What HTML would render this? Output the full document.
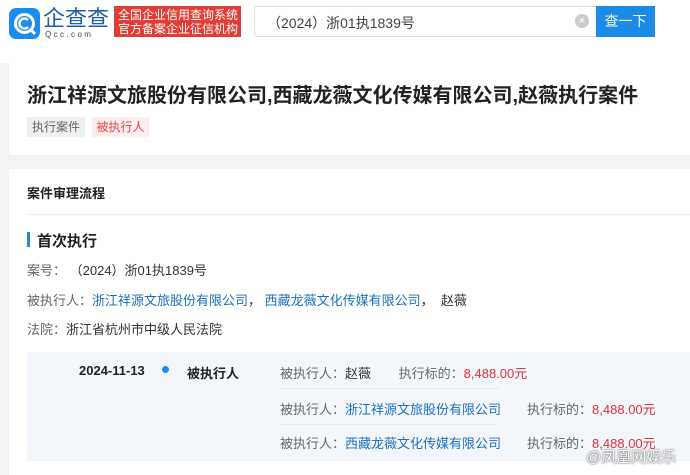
<!DOCTYPE html>
<html><head><meta charset="utf-8"><style>
*{margin:0;padding:0;box-sizing:border-box}
body{width:690px;height:475px;overflow:hidden;background:#f3f3f3;font-family:"Liberation Sans","Noto Sans CJK SC",sans-serif;color:#333;position:relative}
.a{position:absolute;white-space:nowrap}
.g{color:#666}.b{color:#1a6fc4}.r{color:#e0303a}
</style></head><body>
<div class="a" style="left:0;top:0;width:690px;height:63px;background:#fff"></div>
<svg class="a" style="left:9px;top:8px" width="31" height="31" viewBox="0 0 31 31"><rect width="31" height="31" rx="7" fill="#1b8cf0"/><circle cx="15.5" cy="15.5" r="9" fill="none" stroke="#fff" stroke-width="3"/><path d="M19 12a5 5 0 1 0 0 7" fill="none" stroke="#fff" stroke-width="2.5"/><path d="M21 21l5 5" stroke="#fff" stroke-width="3"/></svg>
<div class="a" style="left:43px;top:7px;font-size:22px;color:#1f5fa8;line-height:24px">企查查</div>
<div class="a" style="left:45px;top:30px;font-size:8px;color:#444;letter-spacing:2.4px;line-height:9px">Qcc.com</div>
<div class="a" style="left:114px;top:6px;width:127px;height:31px;background:#e23c35;color:#fff;font-size:12px;line-height:14px;padding:2px 0 0 4px">全国企业信用查询系统<br>官方备案企业征信机构</div>
<div class="a" style="left:254px;top:6px;width:343px;height:31px;border:1px solid #dcdcdc;border-radius:3px 0 0 3px"></div>
<div class="a" style="left:267px;top:13px;font-size:14px;color:#444">（2024）浙01执1839号</div>
<div class="a" style="left:575px;top:14px;width:14px;height:14px;border-radius:50%;background:#ccc;color:#fff;font-size:11px;line-height:14px;text-align:center">×</div>
<div class="a" style="left:596px;top:6px;width:59px;height:31px;background:#1b8ce6;color:#fff;font-size:14px;line-height:31px;text-align:center">查一下</div>
<div class="a" style="left:9px;top:63px;width:681px;height:92px;background:#fff"></div>
<div class="a" style="left:27px;top:83px;font-size:20px;font-weight:bold;color:#222;line-height:26px">浙江祥源文旅股份有限公司,西藏龙薇文化传媒有限公司,赵薇执行案件</div>
<div class="a" style="left:27px;top:117px;width:58px;height:20px;background:#f0f0f0;color:#666;font-size:12px;line-height:20px;text-align:center">执行案件</div>
<div class="a" style="left:92px;top:117px;width:57px;height:20px;background:#fdeeee;color:#e04848;font-size:12px;line-height:20px;text-align:center">被执行人</div>
<div class="a" style="left:9px;top:169px;width:681px;height:306px;background:#fff"></div>
<div class="a" style="left:27px;top:183px;font-size:13px;font-weight:bold;color:#222">案件审理流程</div>
<div class="a" style="left:27px;top:214px;width:663px;height:1px;background:#eee"></div>
<div class="a" style="left:27px;top:232px;width:3px;height:15px;background:#1b8ce6"></div>
<div class="a" style="left:37px;top:230px;font-size:15px;font-weight:bold;color:#222">首次执行</div>
<div class="a" style="left:27px;top:260px;font-size:13px"><span class="g">案号：</span> （2024）浙01执1839号</div>
<div class="a" style="left:27px;top:290px;font-size:13px"><span class="g">被执行人：</span><span class="b">浙江祥源文旅股份有限公司</span>， <span class="b">西藏龙薇文化传媒有限公司</span>， &nbsp;赵薇</div>
<div class="a" style="left:27px;top:319px;font-size:13px"><span class="g">法院：</span>浙江省杭州市中级人民法院</div>
<div class="a" style="left:27px;top:352px;width:663px;height:109px;background:#f3f7fc"></div>
<div class="a" style="left:79px;top:363px;font-size:13px;font-weight:bold;color:#222">2024-11-13</div>
<div class="a" style="left:162px;top:366px;width:7px;height:7px;border-radius:50%;background:#1b8ce6"></div>
<div class="a" style="left:187px;top:363px;font-size:13px;font-weight:bold;color:#222">被执行人</div>
<div class="a" style="left:280px;top:363px;font-size:13px"><span class="g">被执行人：</span>赵薇 <span class="g" style="margin-left:24px">执行标的：</span><span class="r">8,488.00元</span></div>
<div class="a" style="left:280px;top:388px;width:220px;height:1px;background:#e6eaf0"></div>
<div class="a" style="left:280px;top:399px;font-size:13px"><span class="g">被执行人：</span><span class="b">浙江祥源文旅股份有限公司</span><span class="g" style="margin-left:26px">执行标的：</span><span class="r">8,488.00元</span></div>
<div class="a" style="left:280px;top:424px;width:217px;height:1px;background:#e6eaf0"></div>
<div class="a" style="left:280px;top:433px;font-size:13px"><span class="g">被执行人：</span><span class="b">西藏龙薇文化传媒有限公司</span><span class="g" style="margin-left:26px">执行标的：</span><span class="r">8,488.00元</span></div>
<div class="a" style="left:586px;top:446px;font-size:15px;color:#fff;text-shadow:0 0 2px #777,0 0 1px #555">@凤凰网娱乐</div>
</body></html>
